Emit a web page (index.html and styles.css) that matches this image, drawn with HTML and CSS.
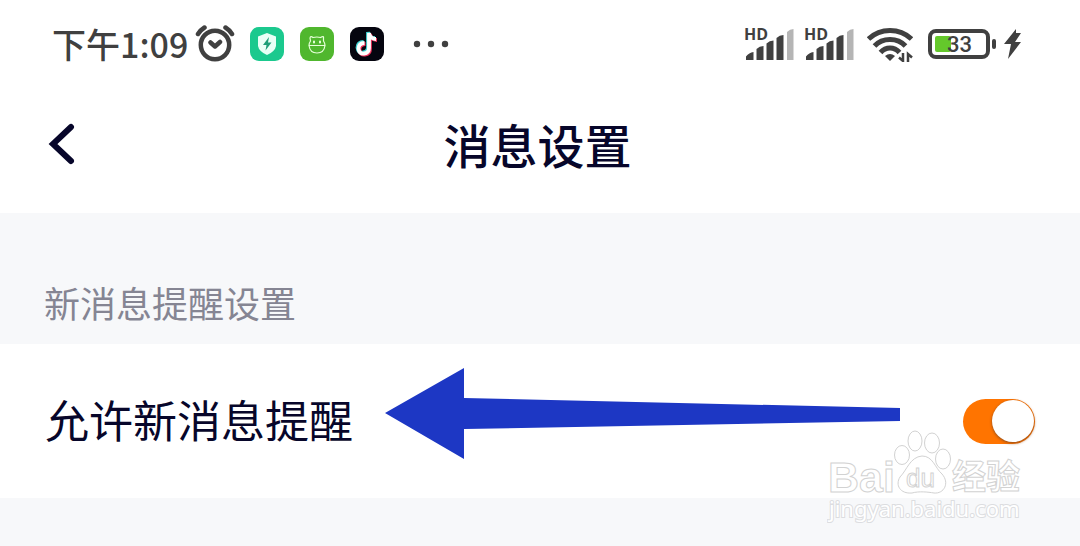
FILE: index.html
```html
<!DOCTYPE html>
<html lang="zh-CN">
<head>
<meta charset="utf-8">
<meta name="viewport" content="width=device-width, initial-scale=1">
<title>消息设置</title>
<link rel="stylesheet" href="styles.css">
</head>
<body>
<div class="status">
  <span class="time">下午1:09</span>
  <svg class="alarm" width="40" height="38" viewBox="0 0 40 38" fill="none" stroke="#404040" stroke-width="4.500" stroke-linecap="round" stroke-linejoin="round">
    <circle cx="20" cy="20" r="14.2"/>
    <path d="M3 9Q5.500 5 9.500 2.500M30.500 2.500Q34.500 5 37 9M15.500 17.500L20 21.500L25 17"/>
  </svg>
  <div class="apps">
    <svg width="34" height="34" viewBox="0 0 34 34">
      <rect width="34" height="34" rx="9" fill="#1bc98e"/>
      <path d="M17 6L26 9.500V19Q25 24.500 17 28Q9 24.500 8 19V9.500Z" fill="#e9fff6"/>
      <path d="M19 10L13 18H16.500L15.500 23.500L21.500 15.500H18Z" fill="#1c9e77"/>
    </svg>
    <svg width="34" height="34" viewBox="0 0 34 34">
      <rect width="34" height="34" rx="9" fill="#50b72e"/>
      <g fill="none" stroke="#e7ffd9" stroke-width="1.200" stroke-linecap="round">
        <path d="M10.500 14L10 11Q10.500 8.500 13 10.500Q17 9.500 20.500 10.500Q24 8.500 23.500 11L23.500 14M10.500 14Q9 16 9 18.500H25Q25 16 23.500 14M9 18.500Q10 26 17 26Q24 26 25 18.500"/>
        <path d="M14 14.500V15.500M20 14.500V15.500" stroke-width="2"/>
      </g>
    </svg>
    <svg width="34" height="34" viewBox="0 0 34 34">
      <rect width="34" height="34" rx="9" fill="#05050f"/>
      <g fill="none" stroke-width="3.800">
        <path d="M14.500 16Q8.500 16 8.500 21.500Q9 27 14 26.500Q19 26 19 21V6Q20 12 26 12" stroke="#3fd5d5" transform="translate(-1 -1)"/>
        <path d="M14.500 16Q8.500 16 8.500 21.500Q9 27 14 26.500Q19 26 19 21V6Q20 12 26 12" stroke="#ee315b" transform="translate(1 1)"/>
        <path d="M14.500 16Q8.500 16 8.500 21.500Q9 27 14 26.500Q19 26 19 21V6Q20 12 26 12" stroke="#fff"/>
      </g>
    </svg>
  </div>
  <svg class="dots" width="36" height="8" viewBox="0 0 36 8" fill="#404040"><circle cx="4" cy="4" r="3.200"/><circle cx="18" cy="4" r="3.200"/><circle cx="32" cy="4" r="3.200"/></svg>
  <div class="network">
    <svg width="50" height="40" viewBox="0 0 50 40" fill="#404040">
      <text class="hd" x="0" y="16">HD</text>
      <path d="M2 36V32.500Q5 28.500 9.500 28V36ZM12.500 36V25Q15.500 22 19.500 22V36ZM22.500 36V19.500Q25.500 16.500 29.500 16.500V36ZM32.500 36V14Q35.500 11 39.500 11V36Z"/>
      <path d="M43 36V8Q46 5 49.500 5V36Z" fill="#b5b5b5"/>
    </svg>
    <svg width="50" height="40" viewBox="0 0 50 40" fill="#404040">
      <text class="hd" x="0" y="16">HD</text>
      <path d="M2 36V32.500Q5 28.500 9.500 28V36ZM12.500 36V25Q15.500 22 19.500 22V36ZM22.500 36V19.500Q25.500 16.500 29.500 16.500V36ZM32.500 36V14Q35.500 11 39.500 11V36Z"/>
      <path d="M43 36V8Q46 5 49.500 5V36Z" fill="#b5b5b5"/>
    </svg>
  </div>
  <svg class="wifi" width="46" height="36" viewBox="0 0 46 36" fill="none" stroke="#404040" stroke-width="5">
    <path d="M1.500 13Q10.500 4.500 23 4.500T44.500 13M7.500 20Q13.500 13.500 23 13.500T38.500 20M13.500 26.500Q17.500 22 23 22T32.500 26.500"/>
    <path d="M18 30Q23 26 28 30L23 35Z" fill="#404040" stroke="none"/>
    <path d="M36 27V35L32 31.500M41 36V28L45 31.500" stroke-width="2.500"/>
  </svg>
  <svg class="battery" width="69" height="30" viewBox="0 0 69 30">
    <rect x="2" y="2" width="58" height="26" rx="6" fill="none" stroke="#404040" stroke-width="4"/>
    <rect x="7" y="7" width="16" height="16" rx="2" fill="#64c82b"/>
    <rect x="64" y="10" width="4" height="10" rx="2" fill="#404040"/>
    <text class="charge" x="19" y="23">33</text>
  </svg>
  <svg class="bolt" width="18" height="30" viewBox="0 0 18 30" fill="#404040"><path d="M12 0L0 15H7L4 30L17 13H11L17 4H12Z"/></svg>
</div>
<header class="header">
  <button class="back" type="button" aria-label="返回">
    <svg width="28" height="42" viewBox="0 0 28 42" fill="none" stroke="#07062a" stroke-width="6" stroke-linecap="round"><path d="M23 4L5 21L23 38"/></svg>
  </button>
  <h1 class="title">消息设置</h1>
</header>
<main class="settings">
  <h2 class="group">新消息提醒设置</h2>
  <div class="row">
    <label class="label" for="allow">允许新消息提醒</label>
    <svg class="arrow" height="106" viewBox="0 0 515 106" preserveAspectRatio="none" fill="#1d37c4"><path d="M0 45L79 0V30L515 40V53L79 61V91Z"/></svg>
    <input class="switch" id="allow" type="checkbox" role="switch" checked>
  </div>
</main>
<svg class="watermark" width="200" height="98" viewBox="0 0 200 98">
  <g class="outline">
    <text class="brand" x="1" y="64">Bai</text>
    <ellipse cx="75" cy="27" rx="7.500" ry="9.500"/>
    <ellipse cx="88" cy="13" rx="7" ry="10"/>
    <ellipse cx="105" cy="15" rx="7.500" ry="10"/>
    <ellipse cx="116" cy="31" rx="7.500" ry="10"/>
    <path d="M95 28C106 28 108 40 115 46C123 55 117 66 107 65C101 64 92 63 85 65C73 66 68 57 73 49C80 42 83 29 95 28Z"/>
    <text class="paw" x="79" y="59">du</text>
    <text class="cn" x="125" y="61">经验</text>
  </g>
  <text class="site" x="2" y="89">jingyan.baidu.com</text>
</svg>
</body>
</html>
```
FILE: styles.css
```css
* {
  box-sizing: border-box;
}

body {
  position: relative;
  min-height: 100vh;
  margin: 0;
  background: #f7f8fa;
  color: #07062a;
  font-family: "Noto Sans CJK SC", sans-serif;
}

.status {
  display: flex;
  align-items: center;
  height: 88px;
  padding: 0 58px 0 52px;
  background: #fff;
}

.time {
  color: #404040;
  font-size: 34px;
  font-weight: 500;
  line-height: 48px;
  white-space: nowrap;
}

.alarm {
  margin-left: 7px;
}

.apps {
  display: flex;
  gap: 16px;
  margin-left: 15px;
}

.dots {
  margin-left: 29px;
}

.network {
  display: flex;
  gap: 10px;
  margin-left: auto;
}

.network svg {
  overflow: visible;
}

.wifi {
  margin-left: 13px;
}

.battery {
  margin-left: 15px;
}

.bolt {
  margin-left: 7px;
}

.hd {
  font: bold 16px "Open Sans", sans-serif;
}

.charge {
  fill: #404040;
  font: 500 22px Roboto, sans-serif;
}

.header {
  display: grid;
  grid-template-columns: 1fr auto 1fr;
  align-items: center;
  height: 125px;
  padding: 0 53px 14px 48px;
  background: #fff;
}

.back {
  justify-self: start;
  display: flex;
  padding: 0;
  border: 0;
  background: none;
}

.title {
  margin: 0;
  font-size: 47px;
  font-weight: 500;
  line-height: 64px;
}

.group {
  margin: 0;
  padding: 63px 44px 16px;
  color: #858593;
  font-size: 36px;
  font-weight: 400;
  line-height: 52px;
}

.row {
  display: flex;
  align-items: center;
  height: 154px;
  padding: 0 45px;
  background: #fff;
}

.label {
  padding-bottom: 4px;
  font-size: 44px;
  line-height: 64px;
  white-space: nowrap;
}

.arrow {
  flex: 1;
  min-width: 0;
  margin: 0 63px 0 32px;
}

.switch {
  flex: none;
  display: flex;
  align-items: center;
  justify-content: flex-end;
  width: 72px;
  height: 45px;
  margin: 0;
  padding: 1px;
  border-radius: 23px;
  background: #ff7400;
  appearance: none;
}

.switch::before {
  width: 42px;
  height: 42px;
  border-radius: 50%;
  background: #fff;
  box-shadow: 0 1px 3px #8a4a1a;
  content: "";
}

.switch:not(:checked) {
  justify-content: flex-start;
  background: #ccc;
}

.watermark {
  position: absolute;
  right: 53px;
  bottom: 20px;
  pointer-events: none;
}

.outline {
  fill: #fff;
  stroke: #d2d2d2;
  stroke-width: 1px;
}

.brand {
  font: bold 43px "Liberation Sans", sans-serif;
}

.paw {
  font: 26px "Liberation Sans", sans-serif;
}

.cn {
  font: bold 34px "Noto Sans CJK SC", sans-serif;
}

.site {
  fill: #fff;
  stroke: #dcdde0;
  stroke-width: 2px;
  paint-order: stroke;
  font: 22px "Noto Sans", sans-serif;
}
```
